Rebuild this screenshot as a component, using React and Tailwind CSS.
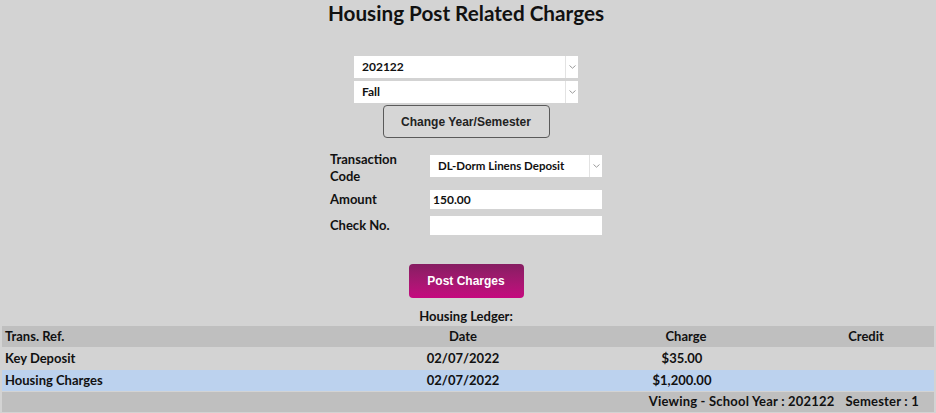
import React from "react";

const font = { fontFamily: "Lato, 'Noto Sans', sans-serif" };

function Chevron() {
  return (
    <span className="flex w-[13px] items-center justify-center self-stretch border-l border-[#e3e3e3]">
      <svg width="7" height="4" viewBox="0 0 7 4" className="text-[#9a9a9a]">
        <path d="M0.5 0.5 L3.5 3.2 L6.5 0.5" fill="none" stroke="currentColor" strokeWidth="1" />
      </svg>
    </span>
  );
}

function FakeSelect({ value, className = "" }) {
  return (
    <div className={`flex h-[22px] items-center bg-white ${className}`}>
      <span className="flex-1 pl-2 font-bold text-[#111]">{value}</span>
      <Chevron />
    </div>
  );
}

const rows = [
  { ref: "Key Deposit", date: "02/07/2022", charge: "$35.00", credit: "", bg: "bg-[#d3d3d3]" },
  { ref: "Housing Charges", date: "02/07/2022", charge: "$1,200.00", credit: "", bg: "bg-[#bcd2ee]" },
];

export default function App() {
  return (
    <div className="min-h-[413px] w-full bg-[#d3d3d3] text-[#111]" style={font}>
      <div className="pr-[4px]">
        {/* Header */}
        <h1 className="pt-[1px] text-center text-[20.7px] font-bold leading-[24px]">
          Housing Post Related Charges
        </h1>

        {/* Year / semester picker */}
        <div className="mt-[31px] flex flex-col items-center">
          <div className="flex w-[224px] flex-col gap-[3px] text-[12px]">
            <FakeSelect value="202122" />
            <FakeSelect value="Fall" />
          </div>
          <button
            type="button"
            className="mt-[2px] h-[33px] w-[167px] rounded-[4px] border border-[#5a5a5a] bg-[#d6d6d6] text-[12px] font-bold text-[#222]"
            style={{ fontFamily: "'Liberation Sans', Arial, sans-serif" }}
          >
            Change Year/Semester
          </button>
        </div>

        {/* Charge form */}
        <div className="mx-auto mt-[11px] grid w-[272px] grid-cols-[100px_172px] items-center gap-y-[7px] text-[13px] font-bold">
          <div className="translate-y-[2px] leading-[17px]">
            Transaction
            <br />
            Code
          </div>
          <FakeSelect value="DL-Dorm Linens Deposit" className="text-[11.5px]" />
          <div className="leading-[17px]">Amount</div>
          <div className="flex h-[19px] items-center bg-white pl-[3px] text-[12px]">150.00</div>
          <div className="leading-[17px]">Check No.</div>
          <div className="h-[19px] bg-white" />
        </div>

        <div className="mt-[29px] flex justify-center">
          <button
            type="button"
            className="h-[34px] w-[115px] rounded-[4px] bg-gradient-to-b from-[#861d62] to-[#c5077f] text-[12px] font-bold text-white"
            style={{ fontFamily: "'Liberation Sans', Arial, sans-serif" }}
          >
            Post Charges
          </button>
        </div>

        {/* Ledger */}
        <p className="mt-[10px] text-center text-[13px] font-bold leading-[17px]">Housing Ledger:</p>
      </div>
      <div className="mx-[2px] mt-[1px] flex flex-col gap-[1px] pb-[1px] text-[13px] font-bold">
        <div className="grid h-[21px] grid-cols-[350px_222px_224px_136px] items-center bg-[#bfbfbf]">
          <span className="pl-[3px]">Trans. Ref.</span>
          <span className="text-center">Date</span>
          <span className="text-center">Charge</span>
          <span className="text-center">Credit</span>
        </div>
        {rows.map((r) => (
          <div
            key={r.ref}
            className={`grid h-[21px] grid-cols-[350px_222px_224px_136px] items-center ${r.bg}`}
          >
            <span className="pl-[3px]">{r.ref}</span>
            <span className="text-center">{r.date}</span>
            <span className="pr-[8px] text-center">{r.charge}</span>
            <span className="text-center">{r.credit}</span>
          </div>
        ))}
        <div className="flex h-[20px] items-center justify-end gap-[11px] bg-[#bfbfbf] pr-[15px] tracking-[0.2px]">
          <span>Viewing - School Year : 202122</span>
          <span>Semester : 1</span>
        </div>
      </div>
    </div>
  );
}
